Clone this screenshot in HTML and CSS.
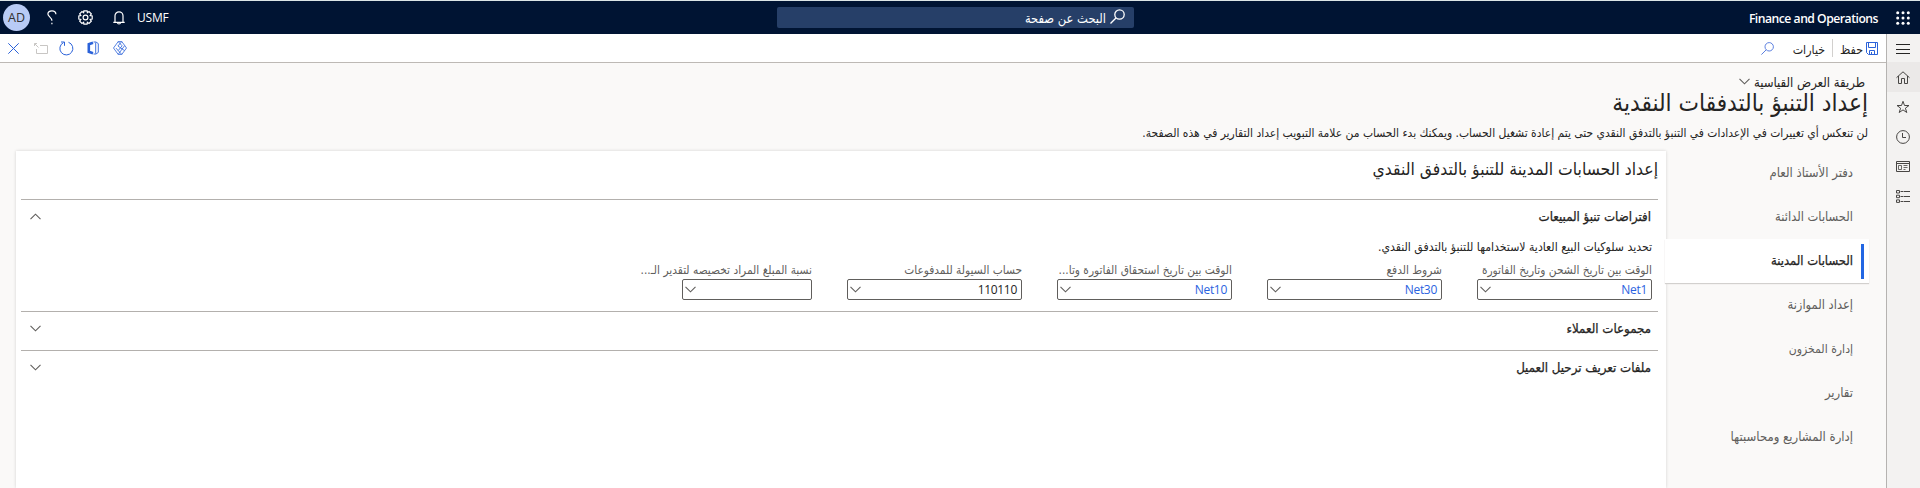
FILE: index.html
```
<!DOCTYPE html>
<html lang="ar" dir="rtl">
<head>
<meta charset="utf-8">
<title>Finance and Operations</title>
<link rel="stylesheet" href="styles.css">
</head>
<body>
<header class="topbar">
  <div class="brand">
    <svg class="waffle" width="14" height="14" viewBox="0 0 14 14" fill="#fff"><circle cx="1.700" cy="1.700" r="1.500"/><circle cx="7" cy="1.700" r="1.500"/><circle cx="12.300" cy="1.700" r="1.500"/><circle cx="1.700" cy="7" r="1.500"/><circle cx="7" cy="7" r="1.500"/><circle cx="12.300" cy="7" r="1.500"/><circle cx="1.700" cy="12.300" r="1.500"/><circle cx="7" cy="12.300" r="1.500"/><circle cx="12.300" cy="12.300" r="1.500"/></svg>
    <span class="brand-name">Finance and Operations</span>
  </div>
  <div class="search">
    <svg width="15" height="15" viewBox="0 0 15 15" fill="none" stroke="#fff" stroke-width="1.300"><circle cx="9.500" cy="5.500" r="4.700"/><path d="M6.200 8.800L.5 14.500"/></svg>
    <span>البحث عن صفحة</span>
  </div>
  <div class="account">
    <span class="avatar">AD</span>
    <svg class="help" width="10" height="15" viewBox="0 0 10 15" fill="none" stroke="#fff" stroke-width="1.200"><path d="M8.900 4.200C8.900 2 7.400.8 5 .8S.9 2.200.9 4c0 2.700 4 3.300 4 6.800"/><path d="M4.900 12.700v1.500"/></svg>
    <svg class="gear" width="15" height="15" viewBox="0 0 15 15" fill="none" stroke="#fff" stroke-width="1.200"><path d="M5.900.8h3.200l.3 1.900 1.600-1.100 2.300 2.300-1.100 1.700 2 .3v3.200l-2 .3 1.100 1.700-2.300 2.300-1.600-1.100-.3 1.900H5.900l-.3-1.900L4 13.400l-2.300-2.300 1.100-1.700-2-.3V5.900l2-.3-1.100-1.700L4 1.600l1.600 1.100z"/><circle cx="7.500" cy="7.500" r="2.400"/></svg>
    <svg class="bell" width="12" height="14" viewBox="0 0 12 14" fill="none" stroke="#fff" stroke-width="1.200"><path d="M2 11V4.800a4 4 0 0 1 8 0V11M.3 11.300h11.400M4.500 11.500a1.500 1.500 0 0 0 3 0"/></svg>
    <span class="company">USMF</span>
  </div>
</header>
<div class="shell">
  <nav class="rail">
    <a class="rail-item menu"><svg width="14" height="10" viewBox="0 0 14 10" stroke="#252423"><path d="M0 .5h14M0 5.500h14M0 9.500h14"/></svg></a>
    <a class="rail-item current"><svg width="14" height="13" viewBox="0 0 14 13" fill="none" stroke="#484644"><path d="M.5 6.700L7 .8l6.500 5.900M2.500 5v7.500h3v-5h3v5h3V5"/></svg></a>
    <a class="rail-item"><svg width="14" height="14" viewBox="0 0 14 14" fill="none" stroke="#484644"><path d="M7 1.300l1.500 4.200H13L9.400 8.200l1.400 4.300L7 9.900l-3.800 2.600 1.400-4.300L1 5.500h4.500z"/></svg></a>
    <a class="rail-item"><svg width="14" height="14" viewBox="0 0 14 14" fill="none" stroke="#484644"><circle cx="7" cy="7" r="6.400"/><path d="M6.500 3v4.500h3.500"/></svg></a>
    <a class="rail-item"><svg width="14" height="11" viewBox="0 0 14 11" fill="none" stroke="#484644"><path d="M.5.500h13v10H.5zM.5 2.500h13"/><path d="M2.500 4.500h3v4h-3zM7.500 4.500h4M7.500 6.500h4M7.500 8.500h2" stroke-width=".8"/></svg></a>
    <a class="rail-item"><svg width="14" height="13" viewBox="0 0 14 13" fill="none" stroke="#484644"><path d="M.5.500h3v2.500h-3zM.5 5.200h3v2.500h-3zM.5 9.900h3v2.500h-3z"/><path d="M4.500 1.500h9.500M4.500 6.500h9.500M4.500 11.500h9.500" stroke-dasharray="3 .5 6"/></svg></a>
  </nav>
  <main class="page">
    <div class="toolbar">
      <div class="actions">
        <svg class="save" width="12" height="13" viewBox="0 0 12 13" fill="none" stroke="#2b62d9"><path d="M.5.500h11v12H2.500l-2-2zM2.500.500v5h7v-5M3.500 12.500v-4h5v4M5.500 10v2.500"/></svg>
        <span class="save-label">حفظ</span>
        <i class="divider"></i>
        <span class="options">خيارات</span>
        <svg class="find" width="13" height="13" viewBox="0 0 13 13" fill="none" stroke="#5b7fe0"><circle cx="8.200" cy="4.800" r="4.200"/><path d="M5.200 7.800L.4 12.600"/></svg>
      </div>
      <div class="page-actions">
        <svg width="11" height="11" viewBox="0 0 11 11" stroke="#2b62d9"><path d="M.3.300l10.400 10.400M10.700.300L.3 10.700"/></svg>
        <svg class="attach" width="14" height="11" viewBox="0 0 14 11" fill="none" stroke="#c8c6c4"><path d="M6 2.500h7.500v8h-11V6M.5 3V.5H3M.7.700L4.500 4.500"/></svg>
        <svg class="refresh" width="15" height="15" viewBox="0 0 15 15" fill="none" stroke="#2b62d9"><path d="M9.500 1.300A6.500 6.500 0 1 1 4.500 1.600M2 1h3.500v3.800"/></svg>
        <svg class="office" width="12" height="14" viewBox="0 0 12 14" fill="none" stroke="#2b62d9"><path d="M6 1.800L1.800 3.200v7.600L6 12.200" stroke-width="2.600"/><path d="M6.500 1H9l2.300 1.600v8.800L9 13H6.500M8.700 1.500v11" stroke-width=".9"/></svg>
        <svg class="diamond" width="14" height="14" viewBox="0 0 14 14" fill="none" stroke="#2b62d9" stroke-width=".8"><path d="M5.200.600h3.600L13.500 7l-4.700 6.400H5.200L.5 7zM5.200.6l3.900 4.200-3.900 4.800L3 7.100M8.800.6L4.900 5l6.500 4.500M8.800 13.400L5.200 9.600M5.200 13.400l6.300-8.600"/></svg>
      </div>
    </div>
    <div class="heading">
      <div class="view"><span>طريقة العرض القياسية</span><svg class="chev" width="11" height="7" viewBox="0 0 11 7"><path d="M.5.800l5 5 5-5"/></svg></div>
      <h1>إعداد التنبؤ بالتدفقات النقدية</h1>
      <p class="intro">لن تنعكس أي تغييرات في الإعدادات في التنبؤ بالتدفق النقدي حتى يتم إعادة تشغيل الحساب. ويمكنك بدء الحساب من علامة التبويب إعداد التقارير في هذه الصفحة.</p>
    </div>
    <div class="workspace">
      <ul class="tabs">
        <li>دفتر الأستاذ العام</li>
        <li class="snug">الحسابات الدائنة</li>
        <li class="active">الحسابات المدينة</li>
        <li class="snug">إعداد الموازنة</li>
        <li class="tight">إدارة المخزون</li>
        <li>تقارير</li>
        <li>إدارة المشاريع ومحاسبتها</li>
      </ul>
      <section class="card">
        <h2>إعداد الحسابات المدينة للتنبؤ بالتدفق النقدي</h2>
        <div class="group open">
          <div class="group-head"><h3>افتراضات تنبؤ المبيعات</h3><svg class="chev" width="11" height="7" viewBox="0 0 11 7"><path d="M.5 6.200l5-5 5 5"/></svg></div>
          <p class="hint">تحديد سلوكيات البيع العادية لاستخدامها للتنبؤ بالتدفق النقدي.</p>
          <div class="fields">
            <div class="field"><span class="label">الوقت بين تاريخ الشحن وتاريخ الفاتورة</span><div class="box">Net1<svg class="chev" width="11" height="7" viewBox="0 0 11 7"><path d="M.5.800l5 5 5-5"/></svg></div></div>
            <div class="field"><span class="label">شروط الدفع</span><div class="box">Net30<svg class="chev" width="11" height="7" viewBox="0 0 11 7"><path d="M.5.800l5 5 5-5"/></svg></div></div>
            <div class="field"><span class="label">الوقت بين تاريخ استحقاق الفاتورة وتا...</span><div class="box">Net10<svg class="chev" width="11" height="7" viewBox="0 0 11 7"><path d="M.5.800l5 5 5-5"/></svg></div></div>
            <div class="field"><span class="label">حساب السيولة للمدفوعات</span><div class="box plain">110110<svg class="chev" width="11" height="7" viewBox="0 0 11 7"><path d="M.5.800l5 5 5-5"/></svg></div></div>
            <div class="field"><span class="label">نسبة المبلغ المراد تخصيصه لتقدير الـ...</span><div class="box short"><svg class="chev" width="11" height="7" viewBox="0 0 11 7"><path d="M.5.800l5 5 5-5"/></svg></div></div>
          </div>
        </div>
        <div class="group"><div class="group-head"><h3>مجموعات العملاء</h3><svg class="chev" width="11" height="7" viewBox="0 0 11 7"><path d="M.5.800l5 5 5-5"/></svg></div></div>
        <div class="group"><div class="group-head"><h3>ملفات تعريف ترحيل العميل</h3><svg class="chev" width="11" height="7" viewBox="0 0 11 7"><path d="M.5.800l5 5 5-5"/></svg></div></div>
      </section>
    </div>
  </main>
</div>
</body>
</html>
```
FILE: styles.css
```
* { box-sizing: border-box; }
body {
  margin: 0;
  height: 488px;
  overflow: hidden;
  display: flex;
  flex-direction: column;
  background: #faf9f8;
  color: #252423;
  font: 13px/18px "DejaVu Sans Condensed", "DejaVu Sans", sans-serif;
  white-space: nowrap;
}
h1, h2, h3, p, ul { margin: 0; padding: 0; font-weight: normal; }
svg { display: block; flex: none; overflow: visible; }
.chev { fill: none; stroke: #605e5c; stroke-width: 1.1; }

/* Top bar */
.topbar {
  flex: none;
  height: 34px;
  border-top: 1px solid #dce5e6;
  background: #001433;
  color: #fff;
  display: grid;
  grid-template-columns: 786px 357px 777px;
}
.brand { display: flex; align-items: center; padding-right: 10px; gap: 18px; }
.brand-name { font: 600 12.2px/18px "Open Sans", sans-serif; letter-spacing: -.5px; padding-top: 2px; }
.search {
  height: 21px;
  margin-top: 6px;
  padding-right: 9px;
  border-radius: 2px;
  background: #263f68;
  display: flex;
  align-items: center;
  gap: 4px;
  font-size: 12.8px;
}
.search svg { margin-bottom: 2px; }
.search span { padding-top: 2px; }
.account { direction: ltr; display: flex; align-items: center; padding-left: 3px; }
.avatar {
  width: 27px;
  height: 27px;
  border-radius: 50%;
  background: #b8cbf5;
  color: #323130;
  font: 12.5px/27px "Open Sans", sans-serif;
  text-align: center;
}
.help { margin-left: 17px; }
.gear { margin-left: 21px; }
.bell { margin-left: 20px; }
.company { margin-left: 12px; font: 12px/18px "Open Sans", sans-serif; letter-spacing: -.2px; padding-top: 1px; }

/* Navigation rail */
.shell { flex: 1; display: flex; min-height: 0; }
.rail { flex: none; width: 34px; background: #f3f2f1; border-left: 1px solid #b5b3b1; }
.rail-item { height: 29.700px; display: flex; align-items: center; justify-content: center; padding-right: 1px; padding-top: 1px; }
.rail-item.menu { height: 28px; padding-top: 2px; }
.rail-item.current { background: #ebe9e8; }

/* Page */
.page { flex: 1; display: flex; flex-direction: column; min-width: 0; }
.toolbar {
  flex: none;
  height: 29px;
  background: #fff;
  border-bottom: 1px solid #bdb9b5;
  display: flex;
  justify-content: space-between;
  padding: 0 8px;
}
.actions { display: flex; align-items: center; font-size: 12.300px; }
.save-label { margin-right: 3px; padding-top: 4px; }
.divider { width: 1px; height: 18px; background: #d2d0ce; margin: 0 7px; }
.options { padding-top: 4px; }
.find { margin-right: 19px; }
.page-actions { direction: ltr; display: flex; align-items: center; }
.attach { margin-left: 15px; }
.refresh { margin-left: 11px; }
.office { margin-left: 13px; }
.diamond { margin-left: 14px; }

.heading { flex: none; height: 88px; padding: 11px 18px 0 0; }
.view { display: flex; align-items: center; gap: 4px; padding-right: 3px; }
.view .chev { margin-bottom: 3px; }
h1 { font-size: 24.200px; line-height: 28px; margin-top: -3px; }
.intro { font-size: 11.940px; line-height: 18px; margin-top: 7px; }

.workspace { flex: 1; display: flex; min-height: 0; }
.tabs { flex: none; width: 220px; list-style: none; color: #605e5c; }
.tabs li { height: 44px; line-height: 44px; padding-right: 33px; }
.tabs .snug { font-size: 12.800px; }
.tabs .tight { font-size: 12.100px; }
.tabs .active {
  position: relative;
  z-index: 1;
  width: 204px;
  margin-right: 17px;
  padding-right: 16px;
  background: #fff;
  color: #252423;
  font-size: 12.900px;
  -webkit-text-stroke: .25px #252423;
  box-shadow: 0 1px 1px #d2d0ce;
}
.tabs .active::before {
  content: "";
  position: absolute;
  right: 5px;
  top: 5px;
  width: 3px;
  height: 35px;
  background: #2266e3;
}
.card {
  flex: 1;
  margin-left: 16px;
  padding: 0 8px 0 5px;
  background: #fff;
  box-shadow: 0 0 3px rgba(0, 0, 0, .16);
}
h2 { height: 48px; padding-top: 7px; font-size: 17.400px; line-height: 22px; }
.group { border-top: 1px solid #b3b0ad; height: 39px; }
.group.open { height: 112px; }
.group-head { display: flex; justify-content: space-between; align-items: center; height: 33px; padding: 0 7px 0 9px; }
h3 { font-size: 13.150px; -webkit-text-stroke: .25px #252423; }
.group-head .chev { margin-top: 0; }
.hint { height: 29px; padding: 5px 6px 0 0; font-size: 12.150px; }
.fields { display: flex; gap: 35px; padding-right: 6px; }
.field { width: 175px; }
.label { display: block; height: 17px; font-size: 11.800px; line-height: 17px; color: #605e5c; }
.box {
  display: flex;
  align-items: center;
  justify-content: space-between;
  height: 21px;
  padding: 0 4px 0 2px;
  border: 1px solid #605e5c;
  border-radius: 2px;
  color: #2b62e0;
  font: 12px/19px "Open Sans", sans-serif;
  letter-spacing: -.3px;
}
.box.plain { color: #252423; }
.box.short { width: 130px; justify-content: flex-end; }
```
